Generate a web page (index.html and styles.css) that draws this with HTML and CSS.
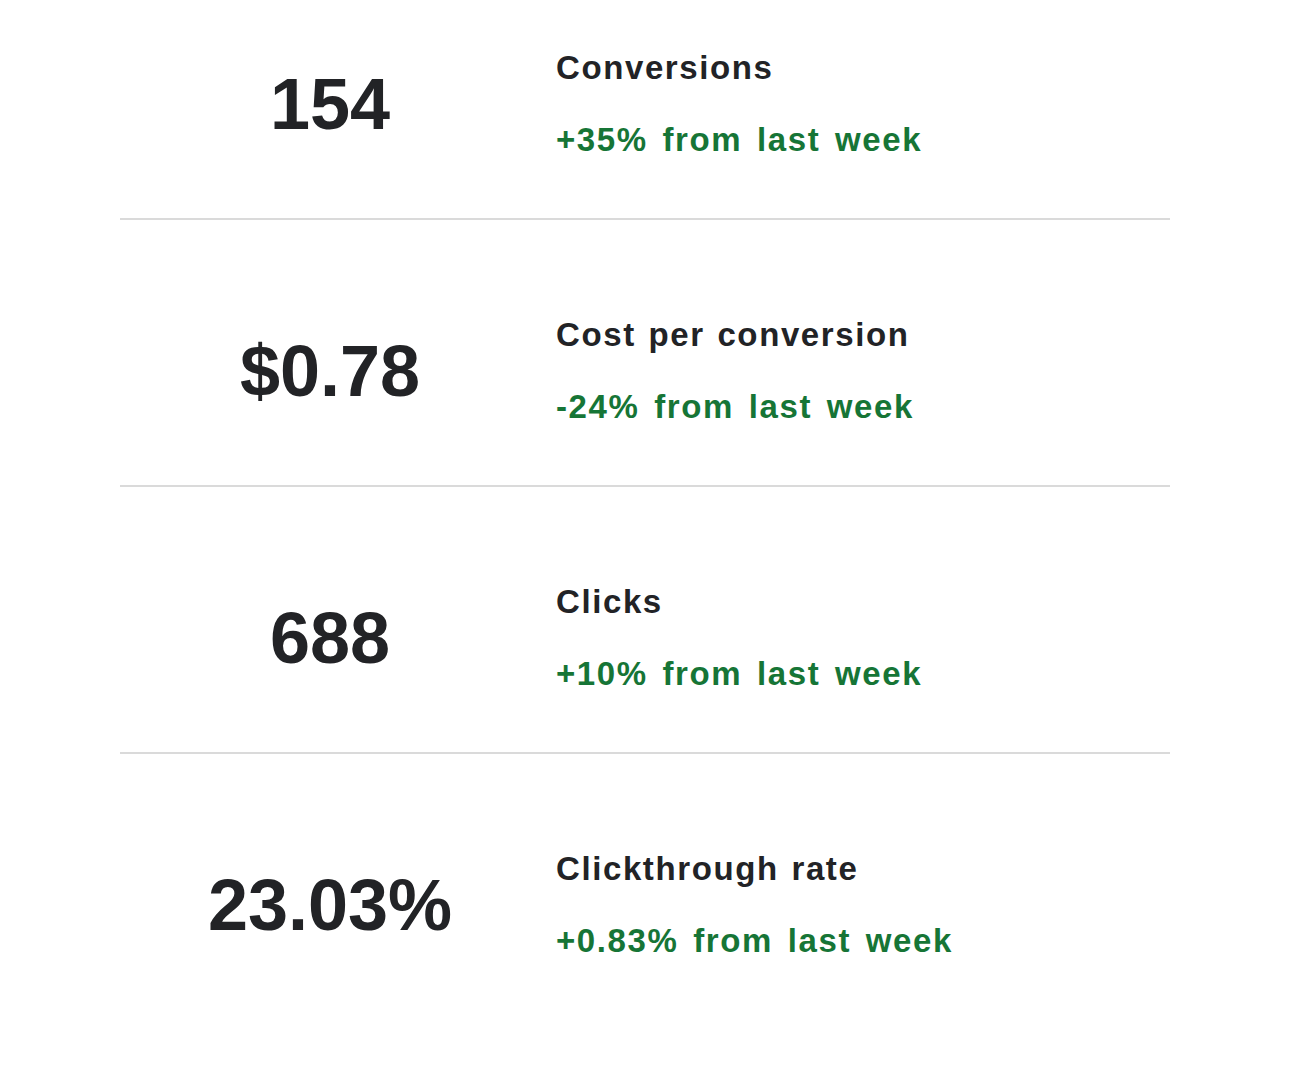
FILE: index.html
```html
<!DOCTYPE html>
<html lang="en">
<head>
<meta charset="utf-8">
<title>Weekly stats</title>
<link rel="stylesheet" href="styles.css">
</head>
<body>
<main class="stats">
  <section class="stat stat-first">
    <div class="stat-value">154</div>
    <div class="stat-info">
      <div class="stat-label">Conversions</div>
      <div class="stat-change">+35% from last week</div>
    </div>
  </section>
  <section class="stat">
    <div class="stat-value">$0.78</div>
    <div class="stat-info">
      <div class="stat-label">Cost per conversion</div>
      <div class="stat-change">-24% from last week</div>
    </div>
  </section>
  <section class="stat">
    <div class="stat-value">688</div>
    <div class="stat-info">
      <div class="stat-label">Clicks</div>
      <div class="stat-change">+10% from last week</div>
    </div>
  </section>
  <section class="stat stat-last">
    <div class="stat-value">23.03%</div>
    <div class="stat-info">
      <div class="stat-label">Clickthrough rate</div>
      <div class="stat-change">+0.83% from last week</div>
    </div>
  </section>
</main>
</body>
</html>
```
FILE: styles.css
```css
html, body {
  margin: 0;
  padding: 0;
  background: #ffffff;
}

body {
  font-family: "Liberation Sans", Arial, sans-serif;
  color: #222326;
}

.stats {
  width: 1050px;
  margin: 0 auto;
  display: flex;
  flex-direction: column;
}

.stat {
  display: flex;
  align-items: center;
  padding: 97px 0 60px;
  border-bottom: 2.5px solid #dadada;
}

.stat-first {
  padding-top: 50px;
}

.stat-last {
  border-bottom: none;
}

.stat-value {
  width: 420px;
  flex: none;
  text-align: center;
  font-size: 72px;
  font-weight: 700;
  line-height: 1;
  color: #222326;
}

.stat-info {
  margin-left: 16px;
  display: flex;
  flex-direction: column;
  gap: 36px;
}

.stat-label {
  font-size: 33px;
  line-height: 36px;
  font-weight: 700;
  letter-spacing: 1.6px;
  word-spacing: 2px;
  color: #222326;
}

.stat-change {
  font-size: 33px;
  line-height: 36px;
  font-weight: 700;
  letter-spacing: 1.6px;
  word-spacing: 4px;
  color: #167536;
}
```
